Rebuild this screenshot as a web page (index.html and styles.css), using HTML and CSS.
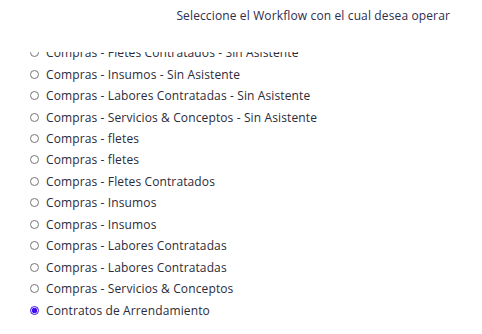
FILE: index.html
```html
<!DOCTYPE html>
<html lang="es">
<head>
    <meta charset="UTF-8">
    <meta name="viewport" content="width=device-width, initial-scale=1.0">
    <title>Workflow</title>
    <link rel="stylesheet" href="styles.css">
</head>
<body>
    <div class="panel">
        <div class="panel-title">Seleccione el Workflow con el cual desea operar</div>
        <div class="wf-list">
            <div class="wf-scroll">
                <label class="wf-item"><input type="radio" name="wf"> Compras - Fletes Contratados - Sin Asistente</label>
                <label class="wf-item"><input type="radio" name="wf"> Compras - Insumos - Sin Asistente</label>
                <label class="wf-item"><input type="radio" name="wf"> Compras - Labores Contratadas - Sin Asistente</label>
                <label class="wf-item"><input type="radio" name="wf"> Compras - Servicios &amp; Conceptos - Sin Asistente</label>
                <label class="wf-item"><input type="radio" name="wf"> Compras - fletes</label>
                <label class="wf-item"><input type="radio" name="wf"> Compras - fletes</label>
                <label class="wf-item"><input type="radio" name="wf"> Compras - Fletes Contratados</label>
                <label class="wf-item"><input type="radio" name="wf"> Compras - Insumos</label>
                <label class="wf-item"><input type="radio" name="wf"> Compras - Insumos</label>
                <label class="wf-item"><input type="radio" name="wf"> Compras - Labores Contratadas</label>
                <label class="wf-item"><input type="radio" name="wf"> Compras - Labores Contratadas</label>
                <label class="wf-item"><input type="radio" name="wf"> Compras - Servicios &amp; Conceptos</label>
                <label class="wf-item"><input type="radio" name="wf" checked> Contratos de Arrendamiento</label>
            </div>
        </div>
    </div>
</body>
</html>
```

FILE: styles.css
```css
body {
    margin: 0;
    font-family: 'Open Sans', 'Noto Sans', sans-serif;
    background: #fff;
    color: #2b2b3a;
}
.panel {
    width: 482px;
    height: 334px;
    overflow: hidden;
}
.panel-title {
    text-align: right;
    padding: 8px 32px 0 0;
    height: 20px;
    font-size: 12px;
    line-height: 16px;
    letter-spacing: 0.13px;
    color: #2e2d4d;
}
.wf-list {
    margin-top: 24px;
    height: 282px;
    overflow: hidden;
}
.wf-scroll {
    margin-top: -10px;
    padding-left: 30px;
}
.wf-item {
    display: flex;
    align-items: center;
    height: 21.46px;
    font-size: 12px;
    letter-spacing: 0.12px;
    color: #2b2b3a;
}
.wf-item input {
    width: 9px;
    height: 9px;
    margin: 0 7px 0 0;
    accent-color: #3d0cf0;
}
```
